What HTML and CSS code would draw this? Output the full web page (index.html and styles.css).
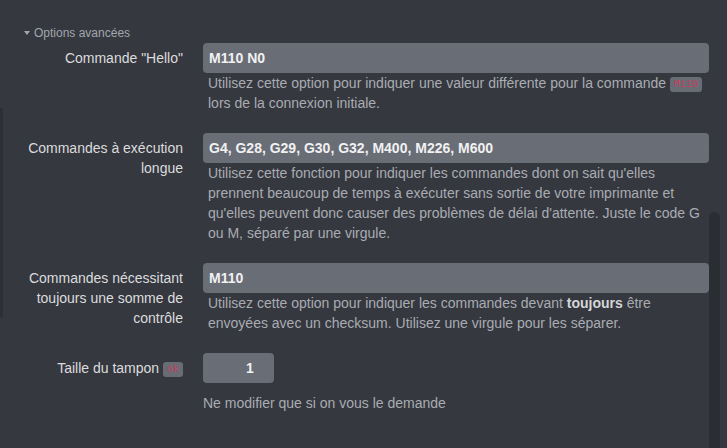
FILE: index.html
```html
<!DOCTYPE html>
<html lang="fr">
<head>
    <meta charset="UTF-8">
    <meta name="viewport" content="width=device-width, initial-scale=1.0">
    <title>Options avancées</title>
    <link rel="stylesheet" href="styles.css">
</head>
<body>
    <div class="page">
        <div class="section-toggle"><span class="caret"></span>Options avancées</div>

        <div class="row">
            <label class="label" for="helloCommand">Commande "Hello"</label>
            <div class="controls">
                <input type="text" id="helloCommand" value="M110 N0">
                <p class="help">Utilisez cette option pour indiquer une valeur différente pour la commande <code>M110</code> lors de la connexion initiale.</p>
            </div>
        </div>

        <div class="row">
            <label class="label" for="longRunning">Commandes à exécution longue</label>
            <div class="controls">
                <input type="text" id="longRunning" value="G4, G28, G29, G30, G32, M400, M226, M600">
                <p class="help">Utilisez cette fonction pour indiquer les commandes dont on sait qu'elles prennent beaucoup de temps à exécuter sans sortie de votre imprimante et qu'elles peuvent donc causer des problèmes de délai d'attente. Juste le code G ou M, séparé par une virgule.</p>
            </div>
        </div>

        <div class="row">
            <label class="label" for="checksum">Commandes nécessitant toujours une somme de contrôle</label>
            <div class="controls">
                <input type="text" id="checksum" value="M110">
                <p class="help">Utilisez cette option pour indiquer les commandes devant <strong>toujours</strong> être envoyées avec un checksum. Utilisez une virgule pour les séparer.</p>
            </div>
        </div>

        <div class="row">
            <label class="label" for="bufferSize">Taille du tampon <code>ok</code></label>
            <div class="controls">
                <input type="text" id="bufferSize" class="small-input" value="1">
                <p class="help help-plain">Ne modifier que si on vous le demande</p>
            </div>
        </div>
    </div>

    <div class="side-strip"></div>
    <div class="scroll-thumb"></div>
</body>
</html>
```

FILE: styles.css
```css
body {
    margin: 0;
    background-color: #35383f;
    font-family: "Liberation Sans", Arial, sans-serif;
    font-size: 14px;
    color: #d9d9db;
    overflow: hidden;
}
.page {
    padding: 25px 18px 0 20px;
}
.section-toggle {
    display: flex;
    align-items: center;
    font-size: 12px;
    line-height: 16px;
    color: #a2a6ad;
    margin: 0 0 2px 4px;
}
.caret {
    width: 0;
    height: 0;
    border-left: 3px solid transparent;
    border-right: 3px solid transparent;
    border-top: 4px solid #a2a6ad;
    margin-right: 4px;
}
.row {
    display: flex;
    margin-bottom: 20px;
}
.label {
    width: 163px;
    flex-shrink: 0;
    margin-right: 20px;
    padding-top: 5px;
    line-height: 20px;
    text-align: right;
    color: #dcdcde;
}
.controls {
    flex: 1;
}
input {
    display: block;
    box-sizing: border-box;
    width: 100%;
    height: 30px;
    padding: 0 6px;
    border: none;
    border-radius: 4px;
    background-color: #696d76;
    color: #f1f1f2;
    font-family: "Liberation Sans", Arial, sans-serif;
    font-size: 14px;
    font-weight: bold;
}
.small-input {
    width: 71px;
    padding: 0 6px 0 29px;
    text-align: center;
}
.help {
    margin: 0;
    padding-left: 5px;
    line-height: 20px;
    color: #a9acb2;
}
.help strong {
    color: #d4d5d8;
}
.help-plain {
    padding-left: 0;
    margin-top: 10px;
}
code {
    font-family: "Liberation Mono", "DejaVu Sans Mono", monospace;
    font-size: 10px;
    line-height: 13px;
    padding: 2px 4px;
    border-radius: 3px;
    background-color: #686c74;
    color: #c4415f;
    vertical-align: 1px;
}
.side-strip {
    position: absolute;
    left: 0;
    top: 108px;
    width: 3px;
    height: 210px;
    background-color: #2c2f35;
    border-radius: 0 3px 3px 0;
}
.scroll-thumb {
    position: absolute;
    left: 709px;
    top: 212px;
    width: 11px;
    height: 240px;
    background-color: #2a2d32;
    border-radius: 6px;
}
```
